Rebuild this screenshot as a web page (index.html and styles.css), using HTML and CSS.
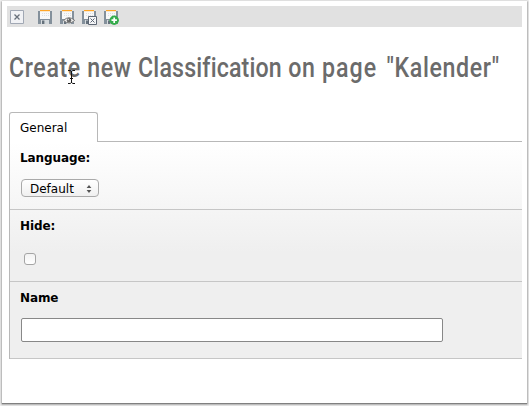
FILE: index.html
```html
<!DOCTYPE html>
<html lang="en">
<head>
<meta charset="utf-8">
<title>Create new Classification</title>
<link rel="stylesheet" href="styles.css">
</head>
<body>
<svg class="defs" width="0" height="0" aria-hidden="true">
  <symbol id="disk" viewBox="0 0 16 16">
    <path d="M1 2h2v7h10V2h2v13H1z" fill="#84909b"/>
    <path d="M3 2h10v8H3z" fill="#f8f8f8"/>
    <path d="M3 1h10v1.2H3z" fill="#ffa526"/>
    <path d="M5 4.5h1m1 0h1m1 0h1m1 0h1M5 6.5h1m1 0h1m1 0h1m1 0h1" stroke="#dcdfe2" stroke-width="1"/>
    <path d="M3 10h10v5H3z" fill="#84909b"/>
    <path d="M4 11h8v4H4z" fill="#d5dadd"/>
    <path d="M5 11.5h2.4V15H5z" fill="#65717c"/>
  </symbol>
</svg>
<main class="window">
  <nav class="toolbar">
    <svg class="icon close" viewBox="0 0 16 16"><path d="M1.5 1.5h13v13h-13z" fill="#f1f2f5" stroke="#a1a8b4"/><path d="M5.5 5.5l5 5m0-5l-5 5" stroke="#68707b" stroke-width="1.3"/></svg>
    <svg class="icon" viewBox="0 0 16 16"><use href="#disk"/></svg>
    <svg class="icon" viewBox="0 0 16 16"><use href="#disk"/><path d="M4.5 11.4Q10 6 15.7 11.4Q10 16.5 4.5 11.4z" fill="#eee" stroke="#777"/><circle cx="10" cy="11.2" r="2.2" fill="#666"/><circle cx="9.3" cy="10.5" r=".7" fill="#ddd"/></svg>
    <svg class="icon" viewBox="0 0 16 16"><use href="#disk"/><path d="M7.5 7.5h8v8h-8z" fill="#f4f5f7" stroke="#5d6673"/><path d="M9.5 9.5l4 4m0-4l-4 4" stroke="#5d6673"/></svg>
    <svg class="icon" viewBox="0 0 16 16"><use href="#disk"/><circle cx="11.2" cy="11.2" r="4.7" fill="#35ac4b"/><path d="M11.2 8.5v5.4M8.5 11.2h5.4" stroke="#fff" stroke-width="1.7"/></svg>
  </nav>
  <h1 class="title"><span class="title-text">Create new <span class="tight">Classification</span> on <span class="loose">page</span> "Kalender"</span>
    <svg class="cursor" viewBox="0 0 9 16"><path d="M1 1.5h2.2l1.3 1 1.3-1H8M1 14.5h2.2l1.3-1 1.3 1H8M4.5 2v12M3 9.5h3" fill="none" stroke="#111"/></svg>
  </h1>
  <div class="tabs"><div class="tab">General</div><div class="tab-rest"></div></div>
  <form class="panel">
    <section class="row language"><label class="label">Language:</label>
      <div class="select">Default<svg class="arrows" viewBox="0 0 6 8"><path d="M3 0l2.4 3H.6zM3 8L.6 5h4.8z" fill="#555"/></svg></div>
    </section>
    <section class="row hide"><label class="label" for="hide">Hide:</label><input class="check" id="hide" type="checkbox"></section>
    <section class="row name"><label class="label" for="name">Name</label><input class="field" id="name" type="text"></section>
  </form>
</main>
</body>
</html>
```
FILE: styles.css
```css
* { box-sizing: border-box; }
body { margin: 0; width: 529px; height: 406px; overflow: hidden; background: #f4f4f4; font: 12px "DejaVu Sans", sans-serif; color: #000; }
.defs { display: block; }
.window { width: 525px; height: 402px; margin: 1px 0 0 2px; padding: 5px 5px 0; background: #fff; box-shadow: 0 1px 1px #808080, 0 1px 2px 1px #b4b4b4; }
.toolbar { display: flex; align-items: center; height: 21px; background: #e1e1e1; padding-left: 2px; gap: 6px; }
.icon { width: 16px; height: 16px; }
.close { margin-right: 6px; }
.title { position: relative; margin: 25px 0 0 2px; height: 60px; line-height: 32px; font-family: Roboto, sans-serif; font-size: 23.2px; font-weight: 500; color: #6b6b6b; white-space: nowrap; }
.title-text { display: inline-block; transform: scaleY(1.163); letter-spacing: .62px; }
.tight { letter-spacing: .15px; }
.loose { letter-spacing: 1px; margin-right: 3px; }
.cursor { position: absolute; left: 58px; top: 17px; width: 9px; height: 16px; }
.tabs { display: flex; height: 30px; margin-left: 2px; }
.tab { width: 89px; padding: 8px 0 0 10px; border: 1px solid #b8b8b8; border-bottom: 0; border-radius: 3px 3px 0 0; }
.tab-rest { flex: 1; border-bottom: 1px solid #b8b8b8; }
.panel { margin-left: 2px; height: 217px; border-left: 1px solid #b8b8b8; background: linear-gradient(#fff, #efefef 110px); }
.row { padding: 9px 0 0 10px; border-bottom: 1px solid #c6c6c6; }
.language { height: 68px; }
.hide { height: 72px; }
.name { height: 77px; }
.label { display: block; font-weight: bold; line-height: 14px; letter-spacing: -.1px; }
.select { display: flex; align-items: center; justify-content: space-between; width: 78px; height: 18px; margin: 14px 0 0 1px; padding: 1px 6px 0 8px; border: 1px solid #aaa; border-radius: 4px; background: linear-gradient(#fff, #f0f0f0); }
.arrows { width: 6px; height: 8px; }
.check { appearance: none; display: block; width: 12px; height: 12px; margin: 20px 0 0 4px; border: 1px solid #a5a5a5; border-radius: 3px; background: linear-gradient(#f2f2f2, #fff); }
.field { display: block; width: 422px; height: 24px; margin: 13px 0 0 1px; border: 1px solid #888; border-radius: 2px; background: #fff; }
```
